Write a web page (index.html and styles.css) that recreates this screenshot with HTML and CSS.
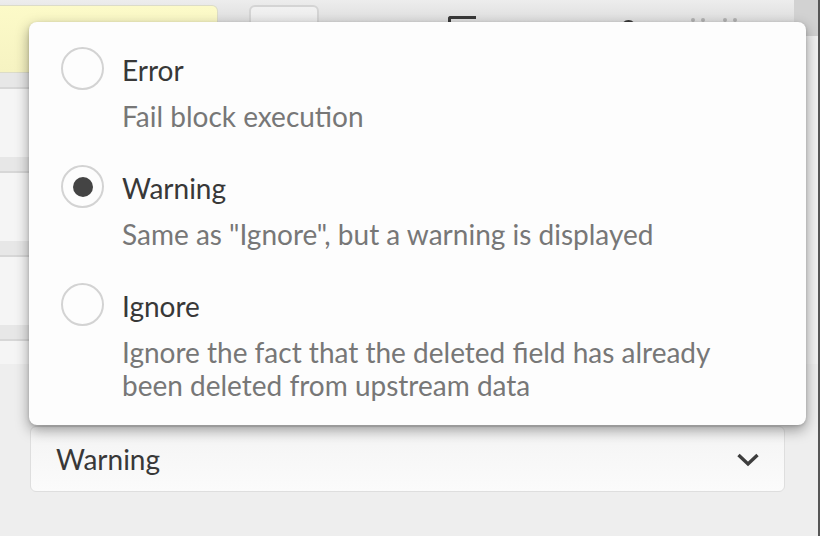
FILE: index.html
```html
<!DOCTYPE html>
<html>
<head>
<meta charset="utf-8">
<link rel="stylesheet" href="styles.css">
</head>
<body>
<div class="app">
  <div class="main">
    <div class="header">
      <div class="yellow-field"></div>
      <div class="tool-btn"></div>
      <div class="icon-square"></div>
      <div class="icon-round"></div>
      <div class="grip"><span></span><span></span></div>
      <div class="grip grip-2"><span></span><span></span></div>
      <div class="spacer"></div>
      <div class="corner"></div>
    </div>
    <div class="rows">
      <div class="row"></div>
      <div class="row"></div>
      <div class="row"></div>
      <div class="row row-last"></div>
    </div>
    <div class="form">
      <div class="select">
        <span class="select-value">Warning</span>
        <svg class="chevron" width="24" height="16" viewBox="0 0 24 16"><polyline points="2.5,3 12,12 21.5,3" fill="none" stroke="#3d3d3d" stroke-width="3.4" stroke-linecap="butt" stroke-linejoin="miter"/></svg>
      </div>
    </div>

    <div class="menu">
      <div class="option">
        <span class="radio"></span>
        <div class="label">Error</div>
        <div class="desc">Fail block execution</div>
      </div>
      <div class="option">
        <span class="radio checked"></span>
        <div class="label">Warning</div>
        <div class="desc">Same as "Ignore", but a warning is displayed</div>
      </div>
      <div class="option">
        <span class="radio"></span>
        <div class="label">Ignore</div>
        <div class="desc">Ignore the fact that the deleted field has already<br>been deleted from upstream data</div>
      </div>
    </div>
  </div>
</div>
</body>
</html>
```

FILE: styles.css
```css
html, body {
  margin: 0;
  padding: 0;
}
body {
  width: 820px;
  height: 536px;
  overflow: hidden;
  background: #f2f2f2;
  font-family: Lato, "Open Sans", sans-serif;
}
.app {
  display: flex;
  width: 820px;
  height: 536px;
  border-right: 2px solid #565656;
  box-sizing: border-box;
}
.main {
  position: relative;
  flex: 1;
  display: flex;
  flex-direction: column;
}
.header {
  height: 73px;
  display: flex;
  align-items: flex-start;
  background: linear-gradient(to bottom, #ededed 0, #e6e6e6 10px, #d7d7d7 36px, #f2f2f2 36px);
}
.yellow-field {
  width: 218px;
  height: 68px;
  margin-top: 5px;
  box-sizing: border-box;
  background: linear-gradient(to bottom, #fcfac8, #f6f3c2);
  border: 1px solid #dcdcc8;
  border-left: none;
  border-radius: 0 6px 0 0;
}
.tool-btn {
  width: 70px;
  height: 40px;
  margin-top: 5px;
  margin-left: 31px;
  box-sizing: border-box;
  border: 2px solid #d4d4d4;
  border-radius: 6px;
  background: linear-gradient(to bottom, #f1f1f1, #e4e4e4);
}
.icon-square {
  width: 28px;
  height: 20px;
  margin-top: 16px;
  margin-left: 129px;
  box-sizing: border-box;
  border-top: 3px solid #3a3a3a;
  border-left: 3px solid #3a3a3a;
  border-top-left-radius: 3px;
}
.icon-round {
  width: 15px;
  height: 15px;
  margin-top: 20px;
  margin-left: 145px;
  border-radius: 50%;
  background: #3a3a3a;
}
.grip {
  display: flex;
  gap: 6px;
  margin-top: 18px;
  margin-left: 55px;
}
.grip-2 {
  margin-left: 18px;
}
.grip span {
  width: 4px;
  height: 4px;
  border-radius: 50%;
  background: #b2b2b2;
}
.spacer {
  flex: 1;
}
.corner {
  width: 24px;
  height: 36px;
  background: #d2d2d2;
}
.rows {
  width: 420px;
  display: flex;
  flex-direction: column;
}
.row {
  height: 84px;
  box-sizing: border-box;
  border-top: 14px solid #e7e7e7;
  background: #f5f5f5;
}
.row::before {
  content: "";
  display: block;
  height: 2px;
  background: #d7d7d7;
}
.row-last {
  height: 39px;
}
.form {
  flex: 1;
  background: #eeeeee;
  padding-top: 62px;
  padding-left: 30px;
}
.select {
  width: 755px;
  height: 66px;
  box-sizing: border-box;
  border: 1.5px solid #dedede;
  border-radius: 6px;
  background: linear-gradient(to bottom, #f4f4f4, #fbfbfb);
  display: flex;
  align-items: center;
  padding: 0 24px 0 25px;
}
.select-value {
  flex: 1;
  font-size: 28px;
  color: #383838;
}
.chevron {
  display: block;
  margin-top: 1px;
}
.menu {
  position: absolute;
  left: 29px;
  top: 22px;
  width: 777px;
  height: 403px;
  box-sizing: border-box;
  background: #fdfdfd;
  border-radius: 8px;
  box-shadow: 0 5px 14px rgba(0, 0, 0, 0.38), 0 1px 3px rgba(0, 0, 0, 0.15);
  padding: 32px 32px 0 32px;
  display: flex;
  flex-direction: column;
  gap: 39px;
}
.option {
  display: grid;
  grid-template-columns: 43px 1fr;
  column-gap: 18px;
  row-gap: 13px;
}
.radio {
  grid-row: 1;
  grid-column: 1;
  width: 43px;
  height: 43px;
  margin-top: -7px;
  margin-bottom: -3px;
  box-sizing: border-box;
  border: 2px solid #d3d3d3;
  border-radius: 50%;
  background: #fdfdfd;
  display: flex;
  align-items: center;
  justify-content: center;
}
.radio.checked::after {
  content: "";
  width: 20px;
  height: 20px;
  border-radius: 50%;
  background: #444444;
}
.label {
  grid-row: 1;
  grid-column: 2;
  font-size: 28px;
  line-height: 33px;
  color: #383838;
}
.desc {
  grid-row: 2;
  grid-column: 2;
  font-size: 28px;
  line-height: 33px;
  color: #777777;
}
```
